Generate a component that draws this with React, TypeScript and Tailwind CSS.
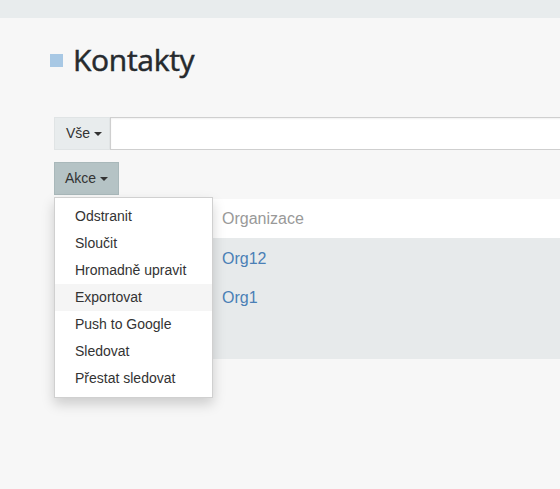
import React from "react";

function Caret() {
  return (
    <span className="inline-block ml-[4px] align-middle w-0 h-0 border-t-[4px] border-t-[#333] border-x-[4px] border-x-transparent" />
  );
}

export default function App() {
  const items = [
    "Odstranit",
    "Sloučit",
    "Hromadně upravit",
    "Exportovat",
    "Push to Google",
    "Sledovat",
    "Přestat sledovat",
  ];
  return (
    <div className="w-[560px] h-[489px] overflow-hidden bg-[#f7f7f7] font-['Liberation_Sans',Arial,sans-serif] text-[#333]">
      <div className="h-[18px] bg-[#e8eced]" />
      <div className="pl-[54px] w-[700px]">
        <div className="flex items-center h-[48px] mt-[18px]">
          <span className="w-[13px] h-[13px] bg-[#a8c8e4] mr-[10px] -ml-[4px]" />
          <h1 className="font-['Open_Sans',sans-serif] text-[30px] leading-none text-[#262a2e] font-normal tracking-[-0.3px] [-webkit-text-stroke:0.5px_#262a2e]">
            Kontakty
          </h1>
        </div>
        <div className="flex mt-[33px] h-[33px]">
          <div className="w-[56px] flex items-center pl-[11px] bg-[#e8eced] border border-[#e0e4e5] text-[14px] text-[#333]">
            Vše
            <Caret />
          </div>
          <div className="flex-1 bg-white border border-[#cfcfcf] shadow-[inset_0_1px_2px_rgba(0,0,0,0.06)]" />
        </div>
        <div className="relative mt-[12px]">
          <div className="w-[65px] h-[33px] flex items-center pl-[10px] bg-[#b5c3c5] border border-[#a9b8ba] text-[14px] text-[#333]">
            Akce
            <Caret />
          </div>
          <div className="mt-[4px]">
            <div className="h-[39px] bg-white flex items-center pl-[168px] text-[16px] text-[#999]">
              Organizace
            </div>
            <div className="bg-[#e7eaeb] h-[121px] pt-[1px]">
              <div className="h-[39px] flex items-center pl-[168px] text-[16px] text-[#4a7fb6]">Org12</div>
              <div className="h-[39px] flex items-center pl-[168px] text-[16px] text-[#4a7fb6]">Org1</div>
            </div>
          </div>
          <div className="absolute left-0 top-[35px] w-[159px] bg-white border border-[#d0d0d0] shadow-[0_6px_12px_rgba(0,0,0,0.175)] py-[5px]">
            {items.map((it) => (
              <div
                key={it}
                className={`h-[27px] leading-[27px] pl-[20px] text-[14px] text-[#333] ${it === "Exportovat" ? "bg-[#f5f5f5]" : ""}`}
              >
                {it}
              </div>
            ))}
          </div>
        </div>
      </div>
    </div>
  );
}
